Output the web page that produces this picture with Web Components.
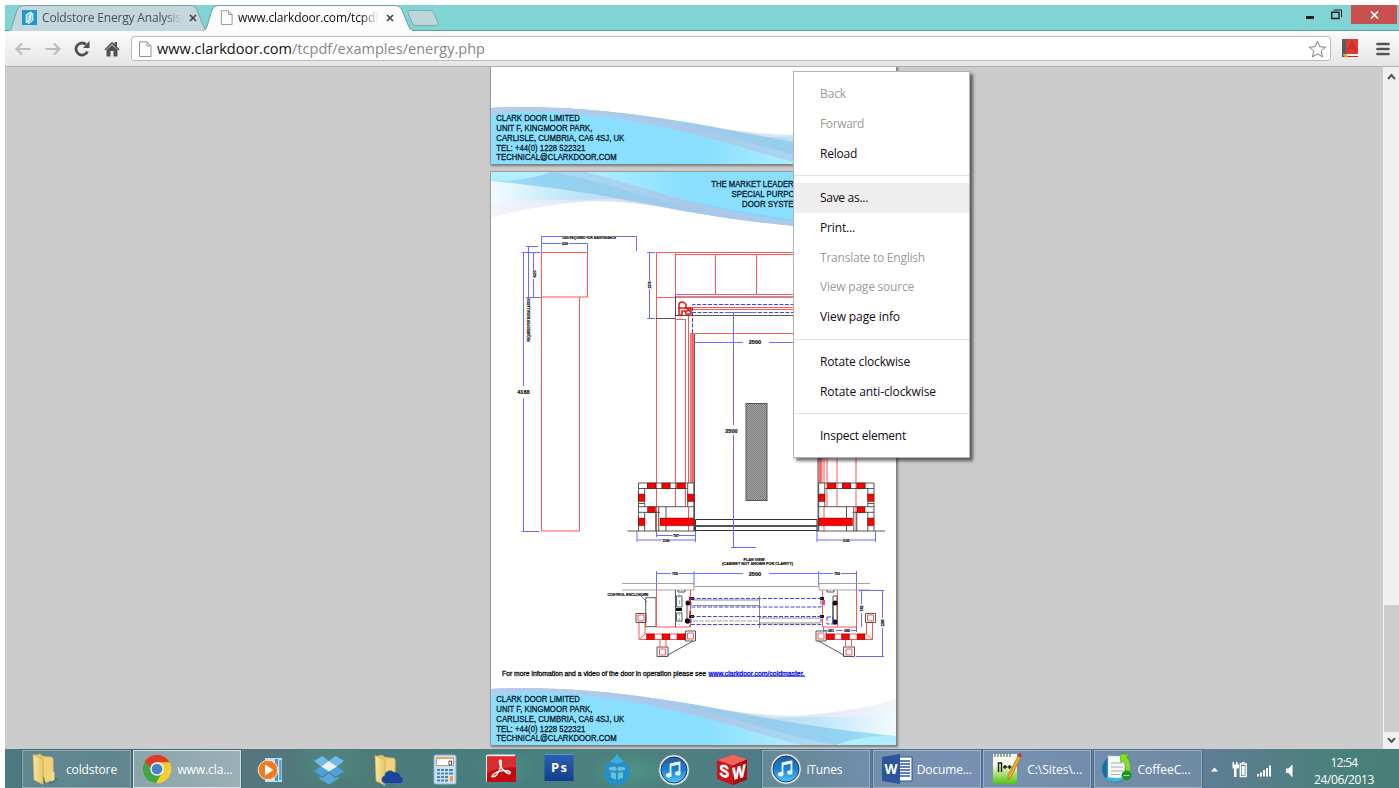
<!DOCTYPE html>
<html lang="en"><head><meta charset="utf-8"><title>Clark Door</title>
<style>
html,body{margin:0;height:100%;overflow:hidden;background:#fff}
body{font-family:"Open Sans","Noto Sans",sans-serif}
</style></head><body>
<desktop-screen></desktop-screen>
<script>
const define=(name,html,setup)=>customElements.define(name,class extends HTMLElement{
  constructor(){super();this.attachShadow({mode:'open'})}
  connectedCallback(){const t=document.createElement('template');t.innerHTML=typeof html==='function'?html(this):html;
    this.shadowRoot.replaceChildren(t.content.cloneNode(true));if(setup)setup(this)}
});

/* Text whose tracking is adjusted to a given width */
define('fit-text','<style>:host{display:inline-block;white-space:pre}span{white-space:pre}</style><span><slot></slot></span>',el=>{
  const s=el.shadowRoot.querySelector('span'),w=+el.getAttribute('w');
  const n=el.textContent.length,now=s.getBoundingClientRect().width;
  if(w&&now)s.style.letterSpacing=((w-now)/n)+'px';
});

/* ---------- icons ---------- */
const note='<circle cx="16" cy="16" r="15.3" fill="#e8edf2" stroke="#64748a" stroke-width=".6"/><circle cx="16" cy="16" r="13" fill="url(#a)" stroke="#0d3e78"/><path d="M12.500 20.500V10.500L21.500 8.500v10.500" fill="none" stroke="#e8f5ff" stroke-width="1.800"/><path d="M12.500 11l9-2" stroke="#e8f5ff" stroke-width="3"/><ellipse cx="10.800" cy="21.300" rx="2.700" ry="2.200" fill="#e8f5ff"/><ellipse cx="19.800" cy="19.400" rx="2.700" ry="2.200" fill="#e8f5ff"/><defs><linearGradient id="a" x2="0" y2="1"><stop stop-color="#2a5a9a"/><stop offset=".5" stop-color="#1d7fd0"/><stop offset="1" stop-color="#56c8f5"/></linearGradient></defs>';
const folder='<defs><linearGradient id="f"><stop stop-color="#f9e7a6"/><stop offset="1" stop-color="#e6c765"/></linearGradient></defs><path d="M12 29l10 2 6-5-5-3z" fill="#204b55" opacity=".3"/><path d="M4 2l6-1 3 2 9 1 1.500 2v21l-7 3z" fill="#e7c666"/><path d="M13 5l9-1v22l-7 3z" fill="#f0d27b"/><path d="M21 18l3.500 1v8l-3.500 1.500z" fill="#f3dc8d"/><path d="M3 1.500l10 4.500v25.500L4 27z" fill="url(#f)" stroke="#cfaa49" stroke-width=".6"/>';
const icons={
 page:'<path d="M2 .8h7.500l4 4v10.700H2z" fill="#fbfbfb" stroke="#949494"/><path d="M9.500.8v4h4" fill="none" stroke="#949494"/>',
 clark:'<path d="M0 0h15v15H0z" fill="#1c9ad2"/><path d="M4.200 4.500l5-2.500v3l-2 1v3.600l-3 3.400zM10.800 3.500v7l-4.500 3.200v-3l2-1.200V5.800z" fill="#dff3fb" fill-opacity=".5" stroke="#fff"/>',
 folder,
 skyfolder:folder+'<path d="M13 29.500a4 4 0 0 1-.4-7.800 5.500 5.500 0 0 1 9.400-3.400 5.200 5.200 0 0 1 6.800 4.200 3.600 3.600 0 0 1-.6 7z" fill="#1b459c" stroke="#6d87b8" stroke-width=".5"/>',
 chrome:'<circle cx="16" cy="16" r="14.300" fill="#f6cf2f"/><path d="M3.600 8.900A14.300 14.300 0 0 0 15 30.300l6.500-11.500L16 16 9.500 18z" fill="#40a545"/><path d="M3.600 8.900l6.200 10.500L16 16l-1-6z" fill="#40a545"/><path d="M3.600 8.900A14.300 14.300 0 0 1 28.500 9.200H16a7 7 0 0 0-6.600 5z" fill="#df3a2c"/><circle cx="16" cy="16" r="6.800" fill="#f5f5f5"/><circle cx="16" cy="16" r="5.300" fill="#4480cc"/>',
 player:'<path d="M10 4h17v24H10z" fill="#bfe0f4"/><path d="M20 5h3v22h-3z" fill="#5296c8"/><path d="M24.200 6h2.300v20h-2.300z" fill="#5c9fcd"/><circle cx="13" cy="16" r="9.800" fill="#f17a1e" stroke="#fde9d3"/><path d="M10 10.500v11l8.500-5.500z" fill="#fff"/>',
 dropbox:'<g fill="#70b9ee"><path d="M9.500 2L16 7l-8 5.500L1 7zM22.500 2L31 7l-7 5.500L16 7z"/><path d="M1 17.500l7-5 8 5-6.500 5zM24 12.500l7 5-8.500 5-6.500-5z" fill="#4f9fe0"/></g><path d="M16 7l8 5.500-8 5-8-5z" fill="#e7f4fd"/><path d="M6.500 22.500l3 1.500 6.500-5 6.500 5 3-1.500v2L16 30.500 6.500 25z" fill="#58a5e0"/>',
 calc:'<rect x="5" y="1" width="22" height="29" rx="1.500" fill="#cfe2f2" stroke="#8cb0ce"/><rect x="7.500" y="3.500" width="17" height="8" fill="#fff" stroke="#b79b7c"/><path d="M7 3h18v2H7z" fill="#e4a85f"/><path d="M20 7h2.500v4H20z" fill="none" stroke="#456"/><g fill="#4e80b5"><path d="M8 15h3v2H8zm4 0h3v2h-3zm4 0h3v2h-3zm4 0h4v2h-4zM8 18.500h3v2H8zm4 0h3v2h-3zm4 0h3v2h-3zm4 0h4v2h-4zM8 22h3v2H8zm4 0h3v2h-3zm4 0h3v2h-3zM8 25.500h3v2H8zm4 0h3v2h-3zm4 0h3v2h-3z"/></g><path d="M21 22h3v5.500h-3z" fill="#eda13e"/>',
 acrobat:'<path d="M0 1l4-.5h25v26l-2 1H0z" fill="#eee"/><path d="M1 2.500h29V28H1z" fill="#c6090f"/><path d="M1 2.500h29v11Q12 13 1 19z" fill="#da2b2f"/><path d="M6 22.500c1-3.500 7-5.500 11-6 4-.5 8 1 7 2.800s-7-2.800-9-6.500-2-6.500-.6-6.500 1 4.600-.4 8.500-5 9.400-8 7.700z" fill="none" stroke="#fff" stroke-width="1.500"/>',
 ps:'<rect x="1.500" y="0" width="29" height="27" fill="url(#p)"/><path d="M1.500 0h29v1h-29z" fill="#5c93d8"/><defs><linearGradient id="p" x2="0" y2="1"><stop stop-color="#2b62b4"/><stop offset="1" stop-color="#123e8c"/></linearGradient></defs><text x="8" y="18" font-family="Open Sans" font-weight="bold" font-size="13" textLength="16" fill="#fff">Ps</text>',
 drop:'<path d="M16 0q3 5 7 7.500a13 13 0 1 1-14 0Q13 5 16 0z" fill="#2390c9"/><path d="M16 0q3 5 7 7.500L16 10 9 7.500Q13 5 16 0z" fill="#3cabe0"/><g fill="#71c0cf"><path d="M8 13.500l6-1 2 2.500-2 2-6-1zM24 13.500l-6-1-2 2.500 2 2 6-1zM10 18l5 1v6.500l-5-2zM22 18l-5 1v6.500l5-2z"/></g>',
 itunes:note,
 sw:'<path d="M1 6L17 .5l14 5v20l-14 5.500L1 25z" fill="#c9161b"/><path d="M1 6L17 .5l14 5-14 6z" fill="#f16459"/><path d="M17 11.500l14-6v20L17 31z" fill="#a80d13"/><g font-family="Liberation Sans" font-weight="bold" font-size="17" fill="#fff" stroke="#fff" stroke-width=".6"><text transform="matrix(.85 .18 0 1 3.500 22)">S</text><text transform="matrix(.8 -.24 0 1 16.500 26)">W</text></g>',
 word:'<path d="M15 4h16v24H15z" fill="#fff" stroke="#2b5797"/><path d="M18 8h11M18 11h11M18 14h11M18 17h11M18 20h11M18 23h11" stroke="#2b5797" stroke-width="1.500"/><path d="M1 4L19 1v30L1 28z" fill="#2b579a"/><text x="3.500" y="21" font-family="Open Sans" font-weight="bold" font-size="13.500" textLength="13" lengthAdjust="spacingAndGlyphs" fill="#fff">W</text>',
 npp:'<path d="M2 1h24v30H2z" fill="#f7faef"/><path d="M2 12h24v19H2z" fill="url(#n)"/><defs><linearGradient id="n" x2="0" y2="1"><stop stop-color="#f7faef"/><stop offset=".5" stop-color="#a9de6a"/><stop offset="1" stop-color="#52c01a"/></linearGradient></defs><path d="M4 1v3M7 1v3M10 1v3M13 1v3M16 1v3M19 1v3" stroke="#444"/><path d="M7.500 19v-9h3v9M12 14h4M14 12v4M16.500 14h4M18.500 12v4" fill="none" stroke="#182513" stroke-width="1.500"/><path d="M27 3l3 1.500L20 24l-3 3 0-5z" fill="#eca727" stroke="#9b6b1d" stroke-width=".6"/><path d="M26.500 3l1.500-3 3 1-1 3.500z" fill="#b63e42"/>',
 coffee:'<circle cx="13.500" cy="16" r="13.500" fill="#1770a5"/><path d="M3 25q10 8 21 0l2-8z" fill="#37b8d8"/><path d="M6 3h15l2 4v17q-8 2-17 0z" fill="#f8f8f8" stroke="#c8cdd0" stroke-width=".6"/><path d="M9 10h11M9 14h12M9 18h12M9 21.500h9" stroke="#aab0b4"/><path d="M18 1h9l-2 3q5 7 3 15h-5q2-6-2-11l-2 2z" fill="#83dd2c" stroke="#3f981f" stroke-width=".6"/><circle cx="24.500" cy="22.500" r="5" fill="#1e9629"/><path d="M21.500 22.500h6" stroke="#9be194"/>'
};
define('app-icon',el=>{const z=el.getAttribute('size')||32,n=el.getAttribute('name'),b=n=='page'?'0 0 15 16':n=='clark'?'0 0 15 15':'0 0 32 32';
 return `<style>:host{display:block;width:${z}px;height:${z}px;flex:none}svg{display:block;width:100%;height:100%;overflow:visible}</style><svg viewBox="${b}">${icons[n]}</svg>`});

/* ---------- browser chrome ---------- */
define('browser-tab',el=>{const a=el.hasAttribute('active');const w=a?212:202;
return `<style>:host{display:block;position:relative;width:${w}px;height:26px;flex:none;z-index:${a?2:1}}
svg.bg{position:absolute;inset:0;overflow:visible}
.r{position:relative;display:flex;align-items:center;height:25px;padding-left:${a?16:14}px;font-size:12px;color:${a?'#111':'#45545a'}}
.l{margin-left:${a?4:5}px;width:140px;overflow:hidden;-webkit-mask:linear-gradient(90deg,#000 88%,transparent 100%)}
.x{margin-left:${a?8:7}px}</style>
<svg class="bg" width="${w}" height="26"><path d="M0 26C3 25 4 22 5 18L9 5Q11 .5 15 .5H${w-20}Q${w-15} .5 ${w-13} 5L${w-7} 20Q${w-5} 25 ${w-2} 26" fill="${a?'#fcfcfc':'#c3d7dc'}" stroke="${a?'#6a9da0':'#73a4a8'}"/>${a?`<path d="M1 26h${w-4}" stroke="#fcfcfc" stroke-width="2"/>`:''}</svg>
<div class="r"><app-icon name="${el.getAttribute('icon')}" size="15"></app-icon><span class="l"><slot></slot></span>
<svg class="x" width="8" height="8"><path d="M1 1l6 6M7 1L1 7" stroke="#454545" stroke-width="1.700"/></svg></div>`});
define('tab-strip',`<style>:host{display:flex;height:26px;background:#80d4d4;padding-left:3px;box-sizing:border-box;border-bottom:1px solid #5d9a9b}
browser-tab+browser-tab{margin-left:-7px}.new{margin:5px 0 0 -9px;position:relative;z-index:3}
.w{margin-left:auto;display:flex;align-items:flex-start}.m{margin:11px 17px 0 0}.c{background:#c75050;width:46px;height:19px;display:grid;place-items:center;margin-right:2px}</style>
<browser-tab icon="clark"><fit-text w="139">Coldstore Energy Analysis</fit-text></browser-tab>
<browser-tab active icon="page"><fit-text w="141">www.clarkdoor.com/tcpdf</fit-text></browser-tab>
<svg class="new" width="35" height="17"><path d="M4 .5H24q3 0 4 3l4 9q1 3-2 3H10q-3 0-4-3L2 3Q1.500.5 4 .5z" fill="#bed5d9" stroke="#77aaae"/></svg>
<div class="w"><svg class="m" width="8" height="3"><path d="M0 0h8v3H0z" fill="#222"/></svg>
<svg style="margin:4px 9px 0 0" width="11" height="11"><path d="M2.500 1H10.500V8" fill="none" stroke="#222"/><path d="M.7 3.200h7.300v6.300H.7z" fill="none" stroke="#222" stroke-width="1.400"/></svg>
<div class="c"><svg width="9" height="8"><path d="M1 .5l7 7M8 .5l-7 7" stroke="#fff" stroke-width="1.700"/></svg></div></div>`);
define('tool-bar',`<style>:host{display:flex;align-items:center;height:36px;box-sizing:border-box;background:linear-gradient(#fbfbfb,#e5e5e5);border-bottom:1px solid #b0b0b0;padding:0 8px 0 10px}
svg{display:block;flex:none}.u{margin-left:11px;width:1200px;box-sizing:border-box;height:25px;display:flex;align-items:center;background:#fff;border:1px solid #bababa;border-radius:3px;padding:0 3px 0 5px;font-size:14.500px;color:#858585}
b{font-weight:400;color:#111}.u fit-text{margin-left:4px}.u .s{margin-left:auto}</style>
<svg width="16" height="14"><path d="M15.500 7H2M7 1.500L1.500 7 7 12.500" fill="none" stroke="#bcbcbc" stroke-width="2.200"/></svg>
<svg width="16" height="14" style="margin-left:14px"><path d="M.5 7H14M9 1.500L14.500 7 9 12.500" fill="none" stroke="#bcbcbc" stroke-width="2.200"/></svg>
<svg width="16" height="16" style="margin-left:13px"><path d="M13.500 10.500A6 6 0 1 1 12 3.500" fill="none" stroke="#505050" stroke-width="2.800"/><path d="M15.500 0v7H9z" fill="#505050"/></svg>
<svg width="16" height="16" style="margin-left:14px"><path d="M.5 8.500L8 .8l2.500 2.400V1H13v4.500l2.500 3-1 1L8 3 1.500 9.500z" fill="#505050"/><path d="M2.500 9L8 4l5.500 5v6.500h-4V10h-3v5.500h-4z" fill="#505050"/></svg>
<div class="u"><app-icon name="page" size="16"></app-icon><fit-text w="135"><b>www.clarkdoor.com</b></fit-text><fit-text w="193" style="margin:0">/tcpdf/examples/energy.php</fit-text>
<svg class="s" width="19" height="18"><path d="M9.500 1.300l2.300 5.400 5.900.5-4.500 3.900 1.400 5.800-5.100-3.100-5.100 3.100 1.400-5.800L1.300 7.200l5.900-.5z" fill="#fff" stroke="#7c7c7c" stroke-linejoin="round"/></svg></div>
<svg width="17" height="19" style="margin-left:11px"><path d="M0 0h4v18H0z" fill="#5a5a5a"/><path d="M4 0h12v15H4z" fill="#e03c31"/><path d="M4 15h12v2.500H4z" fill="#f3f3f3"/><path d="M5 17.500h11" stroke="#c22"/><path d="M1 15h3l2 2-2 2-3-3z" fill="#e8ad32"/><path d="M6 12l4-9 4 9M7.500 9h5" stroke="#b9322b" stroke-width="1.600" fill="none"/></svg>
<svg width="14" height="14" style="margin-left:17px"><path d="M1.500 2h11M1.500 7h11M1.500 12h11" stroke="#555" stroke-width="2.700" stroke-linecap="round"/></svg>`);
define('scroll-bar',`<style>:host{display:flex;flex-direction:column;width:16px;background:#f0f0f0;height:682px;border-left:0}
svg{display:block;margin:6px 4px}.g{flex:1}.t{height:127px;background:#cdcdcd;margin-left:1px}</style>
<svg width="9" height="7"><path d="M1 6l3.500-4L8 6" fill="none" stroke="#555" stroke-width="2"/></svg><div class="g"></div><div class="t"></div><svg width="9" height="5"><path d="M1 0l3.500 4L8 0" fill="none" stroke="#555" stroke-width="2"/></svg>`);

/* ---------- brochure pages ---------- */
const wave=`<defs><linearGradient id="lt" gradientUnits="userSpaceOnUse" x1="260" x2="405"><stop offset="0" stop-color="#b4d6f1"/><stop offset=".5" stop-color="#c2e8f9"/><stop offset="1" stop-color="#f2fbfe"/></linearGradient>
<linearGradient id="cy" gradientUnits="userSpaceOnUse" x1="0" x2="345"><stop stop-color="#8adfff"/><stop offset=".62" stop-color="#8adfff"/><stop offset="1" stop-color="#c0f5ff"/></linearGradient>
<linearGradient id="bl" gradientUnits="userSpaceOnUse" x1="150" x2="405"><stop stop-color="#a9c8e9"/><stop offset=".5" stop-color="#98cdec"/><stop offset=".8" stop-color="#93d3f3"/><stop offset="1" stop-color="#a5e6fc"/></linearGradient>
<linearGradient id="la" gradientUnits="userSpaceOnUse" x1="0" x2="345"><stop stop-color="#b6cdec"/><stop offset=".6" stop-color="#a9c8e8"/><stop offset="1" stop-color="#a9dcf5"/></linearGradient>
<linearGradient id="vw" gradientUnits="userSpaceOnUse" x1="240" x2="405"><stop stop-color="#cfdcf0"/><stop offset="1" stop-color="#f3f5fb"/></linearGradient></defs>
<g id="w"><path d="M0 4C80 0 150 11 194 18S280 35 327 29 385 20 405 14V60H0z" fill="url(#vw)"/>
<path d="M0 4C80 0 150 11 194 18S270 35 290 33 380 34 405 27.500V60H0z" fill="url(#lt)"/>
<path d="M0 4C80 0 150 11 194 18S300 41 405 51V60H0z" fill="url(#bl)"/>
<path d="M345 60Q370 50 405 51.500V60z" fill="#b0efff"/>
<path d="M0 4C80 0 140 11 194 22S300 53 345 60H0z" fill="url(#la)"/>
<path d="M0 10C70 2 150 18 194 28S275 52 311 60H0z" fill="url(#cy)"/><path d="M0 10C70 2 150 18 194 28" fill="none" stroke="#74d6ff" stroke-width="1.200"/></g>`;
const address=(b)=>['CLARK DOOR LIMITED','UNIT F, KINGMOOR PARK,','CARLISLE, CUMBRIA, CA6 4SJ, UK','TEL: +44(0) 1228 522321','TECHNICAL@CLARKDOOR.COM'].map((t,i)=>`<text x="5.300" y="${b+i*9.750}" font-size="8.700" textLength="${[83.500,96,128,89,120.500][i]}" lengthAdjust="spacingAndGlyphs">${t}</text>`).join('');
define('page-footer',`<style>:host{display:block}svg{display:block;font-family:"Liberation Sans",sans-serif;fill:#04161e;stroke:#04161e}text{stroke-width:.28}path{stroke:none}</style><svg width="405" height="60" viewBox="0 0 405 60">${wave}${address(17.3)}</svg>`);
define('page-header',`<style>:host{display:block}svg{display:block;font:8.700px "Liberation Sans",sans-serif}text{fill:#04161e;stroke:#04161e;stroke-width:.28}</style><svg width="405" height="60" viewBox="0 0 405 60"><g transform="rotate(180 202.500 30)">${wave}</g>
<text x="220.300" y="15" textLength="87.500" lengthAdjust="spacingAndGlyphs">THE MARKET LEADERS</text><text x="240.500" y="24.700" textLength="73.500" lengthAdjust="spacingAndGlyphs">SPECIAL PURPOSE</text><text x="251" y="34.500" textLength="58" lengthAdjust="spacingAndGlyphs">DOOR SYSTEM</text></svg>`);

const t=(x,y,s,w,str,extra='')=>`<text x="${x}" y="${y}" font-size="${s}" textLength="${w}" lengthAdjust="spacingAndGlyphs" ${extra}>${str}</text>`;
define('door-drawing',`<style>:host{display:block}svg{display:block;font-family:"Liberation Sans",sans-serif}
.r{fill:none;stroke:#f55;stroke-width:1}.b{fill:none;stroke:#6a6aff;stroke-width:1}.k{fill:none;stroke:#444;stroke-width:.9}.g{fill:none;stroke:#999;stroke-width:.9}.f{fill:#f00;stroke:#400;stroke-width:.4}.d{stroke-dasharray:4 1.500;stroke:#4444e0}text{font-weight:bold;fill:#111;stroke:#111;stroke-width:.2;text-anchor:middle}</style>
<svg width="405" height="453" viewBox="491 232 405 453">
<defs><pattern id="h" width="2" height="2" patternUnits="userSpaceOnUse"><path d="M0 0h2v2H0z" fill="#a2a2a2"/><path d="M0 0l2 2" stroke="#6e6e6e" stroke-width=".7"/></pattern>
<g id="up"><path class="r" d="M656.500 297V531M675.500 252V506M685.500 319V506M675 319.500h11M675 315.500h14M688.500 315V483"/><path d="M690 333h4v150h-4z" fill="#f77"/><path class="k" d="M694.500 333v198"/><path class="r" d="M692.500 333v150"/></g>
<g id="base"><path class="k" d="M638.500 483h55.300v48M638.500 483v48M638.500 488.500h49M687.700 483v24M644.700 488.500v18M638.500 503.500h6M638.500 506.700h55.300M638.500 512.300h21.500M644.700 512v19M655.700 512v19M658.700 507v24M666 507v24M647.500 483v5M662 483v5M677 483v5M655.500 483v5M670 483v5"/><path class="r" d="M688.500 507v24"/>
<path class="f" d="M647.500 483h8v5.500h-8zM662 483h8v5.500h-8zM677 483h8v5.500h-8zM638.700 494h6v7.500h-6zM687.700 494h6v7.500h-6zM647.500 507h8v5.500h-8zM638.700 518h6v7.700h-6zM660 518h33.700v7.700H660z"/>
<path class="k" d="M627.500 531h69"/></g>
<g id="frame"><path class="k" d="M636 613.500h10v9h-10zM685.500 631h10v10h-10zM657 647h11v9.500h-11z"/><path class="r" d="M638 615h6v6h-6zM687.500 633h6v6h-6zM659.500 649h6v6h-6zM639 623v16.500h46M645 623v11h40M639 639.500l6-5.500M660 639.500V647M666 639.500V647"/><path class="k" d="M667 655.500L693 641"/>
<path class="f" d="M646.500 634h8v5.500h-8zM662 634h8v5.500h-8zM677 634h8v5.500h-8z"/></g></defs>
<path class="r" d="M541.500 252.500h46v44.500h-46zM541.500 297V531H579.500V297"/>
<path class="b" d="M541.500 252V236.500h21M616 236.500h20.500V251M541 243.500h20M569 243.500h18.500V252M526 246.500h12M528.500 246v51M533.500 252v18M533.500 279v18M526 297.500h15M521.500 252.500h19M523.500 252v134M523.500 398v133M521.500 531.500h18"/>
${t(589,238.500,4.300,54,'1000 REQUIRED FOR MAINTENANCE')}${t(565,245.300,4,6,'620')}${t(523.500,394,6,12.500,'4168')}
${t(0,0,4,7,'620','transform="translate(535.500 274) rotate(-90)"')}${t(0,0,4,43,'REQUIRED FOR INSTALLATION','transform="translate(530 320) rotate(-90)"')}${t(0,0,4,7,'1376','transform="translate(650.700 285) rotate(-90)"')}
<use href="#up"/><use href="#up" transform="translate(1512.500) scale(-1 1)"/>
<path class="r" d="M656.500 297V252.500H856M656 297.500h20M675 254.500h162M715.500 254v40M756.500 254v40M675 294.500h162M692 307.500h130M692 309.500h130M692 333.500h128"/><path d="M675 297h163" stroke="#813"/><path class="k" d="M675.500 297v19M675 315.500h162M656 318.500h19"/><path class="b d" d="M822 304.500H692.500v29M692 312.500h130"/>
<path d="M679 315v-10q0-3 3-3t4 3v3h5v6h-5l-1-3h-3v4z" fill="none" stroke="#e11" stroke-width="1.500"/><path d="M678 308h8M685 307l6 5M686 312l5-5" stroke="#e11" stroke-width="1.500"/>
<path class="b" d="M647 252.500h8M649.500 252v29M649.500 289v29M647 318.500h8M694 342.500h49M769 342.500h49M725 312.500h31M733.500 312v113M733.500 435v112M731 547.500h25"/>
${t(755,344,5.500,12.500,'2500')}${t(731.500,432.500,5.500,12.500,'2500')}
<rect x="746" y="403.500" width="21" height="97" fill="url(#h)" stroke="#555"/>
<use href="#base"/><use href="#base" transform="translate(1512.500) scale(-1 1)"/>
<path d="M695.500 531V519.500H817V531M695.500 530.500H817" fill="none" stroke="#333"/><path d="M695.500 526H817" stroke="#555" stroke-width="2"/><path class="b" d="M733.500 515v18"/>
<path class="b" d="M637 531v11M695.500 531v11M637 540h25M670 540h25M656.500 531v6M656.500 535.500h16M679 535.500h16M817 531v11M875.500 531v11M817 540h25M850 540h25"/>
${t(676,537,3.600,6,'797')}${t(666,541.500,3.600,7,'1180')}${t(846,541.500,3.600,7,'1180')}
${t(754,560.500,4,21,'PLAN VIEW')}${t(757.500,564.800,4,71,'(CABINET NOT SHOWN FOR CLARITY)')}
<path class="b" d="M656.500 571v20M694 571v14M818.700 571v14M856.500 571v20M656 573.500h15M679 573.500h64M769 573.500h64M841 573.500h16"/>
${t(675,575,3.600,6,'750')}${t(755,575.500,5.500,12.500,'2500')}${t(837,575,3.600,6,'750')}
<path class="g" d="M622 583.500h72v6.500h-72M870 583.500h-51v6.500h51M694 586.500h125"/>
${t(628,595.700,4,41,'CONTROL ENCLOSURE')}<path class="b" d="M640 595l7 7"/><path class="k" d="M645.700 597.700h10.300v29h-10.300z"/>
<path class="r" d="M656.500 590v37h34V590M822.500 590v37h34V590M837.500 590v37"/><path class="k" d="M675.500 590v37M678 590v2h7v-2M827 590v2h7v-2M676.500 596h5.500v11h-5.500zM676.500 613h5.500v8h-5.500zM687 604v17M833 596h4v28h-4zM833 604v17"/><path d="M679.300 594v31" stroke="#55c9cf" stroke-dasharray="4 2"/>
<g fill="#111"><circle cx="688" cy="603" r="2.500"/><circle cx="687.500" cy="621" r="2.700"/><circle cx="835" cy="603" r="2.500"/><circle cx="835" cy="622" r="2.500"/><path d="M689 597h5v3h-5zM689 615h5v3h-5zM820 597h4v3h-4zM820 615h4v3h-4zM676 608h6v3h-6z"/></g><path d="M690 597v29M824 600v14" stroke="#e11" stroke-width="1.500" stroke-dasharray="5 9"/>
<path class="b d" d="M691 598.500h130v8.500H691zM691 616.500h130v8H691zM827 617h6v7h-6z"/><path class="k" d="M693 600h66M693 605.500h66M759 618h61M759 623h61M759.500 596v32" stroke-opacity=".7"/><path d="M693 621h66" class="g" stroke-dasharray="5 1"/>
<use href="#frame"/><use href="#frame" transform="translate(1511.500) scale(-1 1)"/>
<path class="b" d="M823.500 627v5M856.500 627v5M823 630.500h5M836 630.500h7M851 630.500h6M861.500 590v14M861.500 613v14M859 590.500h25M882.500 590v28M882.500 628v29M856 656.500h28"/>
${t(831,632,3.600,6,'261')}${t(847,632,3.600,6,'386')}${t(0,0,3.600,6,'742','transform="translate(863 608.500) rotate(-90)"')}${t(0,0,3.600,7,'1200','transform="translate(884 623) rotate(-90)"')}
${t(604,675.500,6.500,204,'For more infomation and a video of the door in operation please see','style="font-weight:400;stroke-width:.3"')}
${t(756.500,675.500,6.500,96,'www.clarkdoor.com/coldmaster.','style="font-weight:400;fill:#11e;stroke:#11e;stroke-width:.3"')}<path d="M708.500 676.300h96.500" stroke="#11e" stroke-width=".8"/>
</svg>`);
define('brochure-page','<style>:host{display:flex;flex-direction:column;width:405px;flex:none;background:#fff;box-shadow:0 0 0 .5px #888,1px 1px 2px 1px #777}slot[name=foot]{display:block}.f{margin-top:auto}</style><slot></slot><div class="f"><slot name="foot"></slot></div>');
define('pdf-viewer',`<style>:host{display:flex;flex-direction:column;align-items:center;gap:8px;flex:1;height:682px;box-sizing:border-box;padding-right:1px;background:#ccc;overflow:hidden}</style>
<brochure-page style="height:97px"><page-footer slot="foot"></page-footer></brochure-page>
<brochure-page style="height:573px"><page-header></page-header><door-drawing></door-drawing><page-footer slot="foot"></page-footer></brochure-page>`);

/* ---------- context menu ---------- */
define('menu-item',`<style>:host{display:flex;align-items:center;height:29.700px;padding-left:26px;font-size:12px;color:#140a18}:host([disabled]){color:#9c9c92}:host([hot]){background:#eee}</style><slot></slot>`);
define('context-menu',`<style>:host{display:block;width:177px;box-sizing:border-box;height:387px;padding-top:7px;background:#fff;border:1px solid #b4b4b4;box-shadow:3px 3px 3px rgba(0,0,0,.55)}hr{border:0;border-top:1px solid #e2e2e2;margin:7px 0}</style>
<menu-item disabled><fit-text w="26">Back</fit-text></menu-item><menu-item disabled><fit-text w="44">Forward</fit-text></menu-item><menu-item><fit-text w="37">Reload</fit-text></menu-item><hr>
<menu-item hot><fit-text w="48">Save as...</fit-text></menu-item><menu-item><fit-text w="35">Print...</fit-text></menu-item><menu-item disabled><fit-text w="105">Translate to English</fit-text></menu-item><menu-item disabled><fit-text w="94">View page source</fit-text></menu-item><menu-item><fit-text w="80">View page info</fit-text></menu-item><hr>
<menu-item><fit-text w="90">Rotate clockwise</fit-text></menu-item><menu-item><fit-text w="116">Rotate anti-clockwise</fit-text></menu-item><hr><menu-item><fit-text w="86">Inspect element</fit-text></menu-item>`);

/* ---------- taskbar ---------- */
define('task-button',`<style>:host{display:flex;align-items:center;gap:7px;width:108px;height:38px;box-sizing:border-box;padding-left:7px;border:1px solid rgba(215,232,238,.4);outline:1px solid rgba(20,60,75,.28);background:rgba(190,205,225,.16);color:#fff;font-size:12px;flex:none}:host([active]){background:linear-gradient(90deg,rgba(220,230,233,.4),rgba(225,233,235,.5));border-color:#d5e2e4}</style><slot></slot>`);
define('task-bar',`<style>:host{display:flex;align-items:flex-start;height:39px;box-sizing:border-box;padding:1px 0 0 17px;color:#fff;background:radial-gradient(ellipse 40px 25px at 325px 15px,#4d8b7a,transparent),radial-gradient(ellipse 30px 20px at 500px 20px,#4e9381,transparent),radial-gradient(ellipse 45px 20px at 625px 22px,#4d9482,transparent),radial-gradient(ellipse 160px 60px at 960px 20px,#6b86ab,transparent),linear-gradient(90deg,#4c7a82,#54767f 18%,#4d7b78 25%,#477e80 36%,#4c817d 45%,#4f7d86 54%,#657fa0 65%,#657fa0 78%,#617f9a 85%,#577e89 90%,#4b807d 95%,#467e75)}
.i{display:flex;gap:25.400px;margin:4px 0 0 11px;width:507px;box-sizing:border-box}task-button{margin-right:2.400px}
.t{display:flex;align-items:center;height:38px;margin-left:7px}.t svg{display:block}.c{display:flex;flex-direction:column;align-items:center;font-size:12px;line-height:17px;margin-left:21px;margin-top:3px}</style>
<task-button style="width:109px"><app-icon name="folder"></app-icon><fit-text w="51" style="margin-left:-3px">coldstore</fit-text></task-button><task-button active style="margin-right:3px"><app-icon name="chrome"></app-icon><fit-text w="55" style="margin-left:-3px">www.cla...</fit-text></task-button>
<div class="i"><app-icon name="player"></app-icon><app-icon name="dropbox"></app-icon><app-icon name="skyfolder" style="margin-left:2px"></app-icon><app-icon name="calc" style="margin-left:-1px"></app-icon><app-icon name="acrobat"></app-icon><app-icon name="ps"></app-icon><app-icon name="drop"></app-icon><app-icon name="itunes"></app-icon><app-icon name="sw"></app-icon></div>
<task-button><app-icon name="itunes"></app-icon><fit-text w="36" style="margin-left:-3px">iTunes</fit-text></task-button><task-button><app-icon name="word"></app-icon><fit-text w="55" style="margin-left:-3px">Docume...</fit-text></task-button><task-button><app-icon name="npp"></app-icon><fit-text w="55" style="margin-left:-3px">C:\\Sites\\...</fit-text></task-button><task-button><app-icon name="coffee"></app-icon><fit-text w="53" style="margin-left:-3px">CoffeeC...</fit-text></task-button>
<div class="t"><svg width="82" height="20" fill="#fff"><path d="M0 12.500l3.500-4L7 12.500z"/><path d="M21.500 5.500V3H23v2.500h2V3h1.500v2.500H28v4h-2.500V18h-2.500V9.500h-1.500z"/><path d="M29.300 5h5.900v12.500h-5.900z" fill="none" stroke="#fff" stroke-width="1.400"/><path d="M30.700 7h3v9h-3zM30.700 3h3v1.500h-3z"/><path d="M46 15h2v2.500h-2zM49 13.500h2v4h-2zM52 11h2v6.500h-2zM55 9h2v8.500h-2zM58 6.500h2v11h-2zM75 9.500h2.500l4-4v13l-4-4.500H75z"/></svg>
<div class="c"><fit-text w="27">12:54</fit-text><fit-text w="60">24/06/2013</fit-text></div></div>`);

define('desktop-screen',`<style>:host{display:flex;flex-direction:column;box-sizing:border-box;width:1399px;height:788px;padding:5px 0 0 5px;position:relative;background:#fff}.v{display:flex}context-menu{position:absolute;left:793px;top:71px;z-index:9}</style>
<tab-strip></tab-strip><tool-bar></tool-bar><div class="v"><pdf-viewer></pdf-viewer><scroll-bar></scroll-bar></div><task-bar></task-bar><context-menu></context-menu>`);
</script></body></html>
